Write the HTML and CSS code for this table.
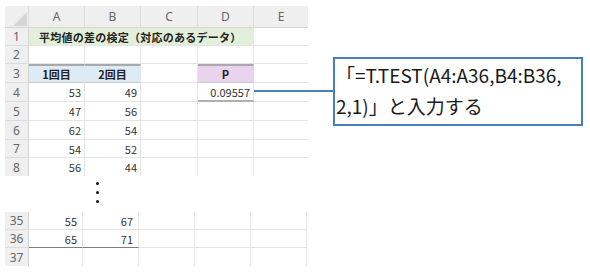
FILE: index.html
```html
<!DOCTYPE html>
<html lang="ja">
<head>
<meta charset="utf-8">
<title>平均値の差の検定</title>
<link rel="stylesheet" href="styles.css">
</head>
<body>
<div class="page">
  <div class="sheet top">
    <div class="corner"><span class="tri"></span></div>
    <div class="colhead">A</div>
    <div class="colhead">B</div>
    <div class="colhead">C</div>
    <div class="colhead">D</div>
    <div class="colhead last">E</div>

    <div class="rowhead">1</div>
    <div class="cell title span4">平均値の差の検定（対応のあるデータ）</div>
    <div class="cell last"></div>

    <div class="rowhead">2</div>
    <div class="cell"></div><div class="cell"></div><div class="cell"></div><div class="cell"></div><div class="cell last"></div>

    <div class="rowhead">3</div>
    <div class="cell thead blue">1回目</div>
    <div class="cell thead blue">2回目</div>
    <div class="cell"></div>
    <div class="cell thead pink">P</div>
    <div class="cell last"></div>

    <div class="rowhead">4</div>
    <div class="cell num">53</div>
    <div class="cell num">49</div>
    <div class="cell"></div>
    <div class="cell num pval">0.09557</div>
    <div class="cell last"></div>

    <div class="rowhead">5</div>
    <div class="cell num">47</div><div class="cell num">56</div><div class="cell"></div><div class="cell"></div><div class="cell last"></div>
    <div class="rowhead">6</div>
    <div class="cell num">62</div><div class="cell num">54</div><div class="cell"></div><div class="cell"></div><div class="cell last"></div>
    <div class="rowhead">7</div>
    <div class="cell num">54</div><div class="cell num">52</div><div class="cell"></div><div class="cell"></div><div class="cell last"></div>
    <div class="rowhead end">8</div>
    <div class="cell num end">56</div><div class="cell num end">44</div><div class="cell end"></div><div class="cell end"></div><div class="cell last end"></div>
  </div>

  <div class="ellipsis"><i></i><i></i><i></i></div>

  <div class="sheet bottom">
    <div class="rowhead">35</div>
    <div class="cell num">55</div><div class="cell num">67</div><div class="cell"></div><div class="cell"></div><div class="cell"></div>
    <div class="rowhead">36</div>
    <div class="cell num tail">65</div><div class="cell num tail">71</div><div class="cell"></div><div class="cell"></div><div class="cell"></div>
    <div class="rowhead end">37</div>
    <div class="cell end"></div><div class="cell end"></div><div class="cell end"></div><div class="cell end"></div><div class="cell end"></div>
  </div>

  <div class="connector"></div>
  <div class="callout">「=T.TEST(A4:A36,B4:B36,<br>2,1)」と入力する</div>
</div>
</body>
</html>
```

FILE: styles.css
```css
html, body {
  margin: 0;
  padding: 0;
  background: #ffffff;
}

body {
  font-family: "Noto Sans CJK JP", "Noto Sans", sans-serif;
  color: #333333;
}

.page {
  position: relative;
  width: 590px;
  height: 278px;
  padding: 6px 0 0 5px;
  box-sizing: border-box;
}

.sheet {
  display: grid;
  font-size: 11px;
}

.sheet.top {
  grid-template-columns: 24px 56px 56px 57px 56px 54px;
  grid-template-rows: 22px 18px 18px 19px 19px 19px 19px 18px 18px;
}

.sheet.bottom {
  margin-top: 36px;
  grid-template-columns: 24px 54px 56px 56px 56px 56px;
  grid-template-rows: 18px 18px 18px;
}

.corner,
.colhead,
.rowhead,
.cell {
  box-sizing: border-box;
}

.corner {
  position: relative;
  background: #efefef;
  border-right: 1px solid #dcdcdc;
  border-bottom: 1px solid #d4d4d4;
}

/* select-all triangle in the corner cell */
.corner .tri {
  position: absolute;
  right: 1px;
  bottom: 1px;
  width: 0;
  height: 0;
  border-left: 14px solid transparent;
  border-bottom: 14px solid #d6d6d6;
}

.colhead {
  background: #efefef;
  color: #666666;
  display: flex;
  align-items: center;
  justify-content: center;
  border-right: 1px solid #dcdcdc;
  border-bottom: 1px solid #d4d4d4;
  font-family: "Noto Sans", "Noto Sans CJK JP", sans-serif;
  font-size: 12px;
}

.colhead.last {
  border-right: none;
}

.rowhead {
  background: #efefef;
  color: #666666;
  display: flex;
  align-items: center;
  justify-content: center;
  border-right: 1px solid #d4d4d4;
  border-bottom: 1px solid #dcdcdc;
  font-family: "Noto Sans", "Noto Sans CJK JP", sans-serif;
  font-size: 12px;
}

.cell {
  border-right: 1px solid #e4e4e4;
  border-bottom: 1px solid #e4e4e4;
  display: flex;
  align-items: center;
  padding: 0 3px;
  white-space: nowrap;
}

.cell.last {
  border-right: none;
}

.end {
  border-bottom: none;
}

.span4 {
  grid-column: span 4;
}

.title {
  background: #e2efda;
  font-weight: bold;
  color: #222222;
  padding-left: 10px;
  letter-spacing: 0.25px;
  border-right-color: #e2efda;
}

.thead {
  font-weight: bold;
  color: #222222;
  justify-content: center;
  border-top: 2px solid #a9a9a9;
  border-bottom: 1px solid #c8c8c8;
}

.blue {
  background: #ddebf7;
  border-right-color: #ddebf7;
}

.pink {
  background: #e9d3ee;
  border-right-color: #e9d3ee;
}

.num {
  justify-content: flex-end;
}

.pval {
  border-bottom: 2px solid #b0b0b0;
}

.bottom .num {
  padding-right: 5px;
}

.tail {
  border-bottom: 1px solid #7f7f7f;
}

/* vertical ellipsis between the row blocks */
.ellipsis {
  position: absolute;
  left: 96px;
  top: 182px;
  display: flex;
  flex-direction: column;
  gap: 6px;
}

.ellipsis i {
  display: block;
  width: 3px;
  height: 3px;
  border-radius: 50%;
  background: #111111;
}

.connector {
  position: absolute;
  left: 254px;
  top: 90px;
  width: 80px;
  height: 2px;
  background: #4a7ebb;
}

.callout {
  position: absolute;
  left: 333px;
  top: 57px;
  width: 250px;
  height: 69px;
  box-sizing: border-box;
  border: 2px solid #4a7ebb;
  background: #ffffff;
  padding: 0 0 0 1px;
  font-size: 19px;
  line-height: 31px;
  color: #1a1a1a;
  white-space: nowrap;
}
```
